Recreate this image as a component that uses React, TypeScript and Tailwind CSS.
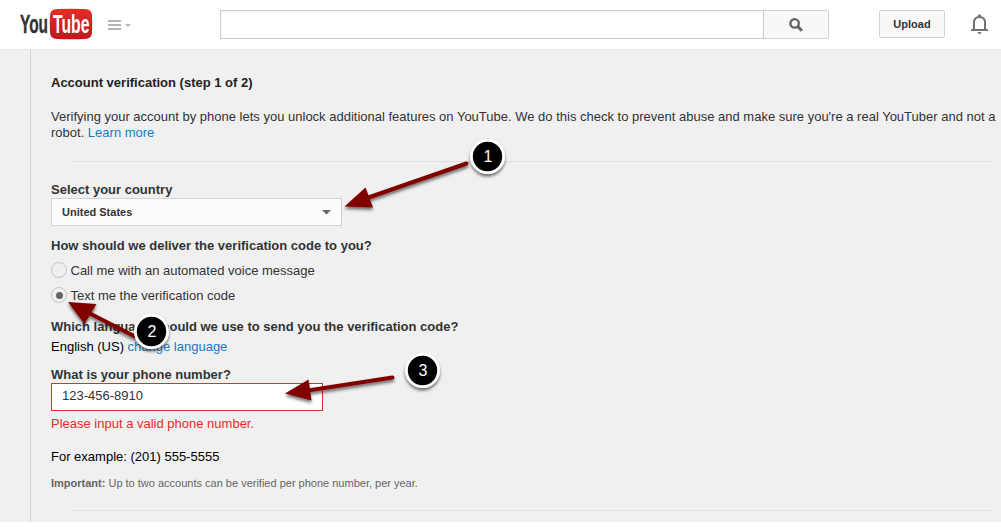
import { useState } from 'react';

type Marker = {
  label: string;
  cx: number;
  cy: number;
  // shaft runs from the badge to the base of the arrow head
  from: [number, number];
  to: [number, number];
  head: string;
};

const markers: Marker[] = [
  { label: '1', cx: 487.5, cy: 156.5, from: [466.5, 163.5], to: [367, 198], head: '344.5,206.5 365.5,187.5 373,207.5' },
  { label: '2', cx: 151.5, cy: 331.5, from: [134, 336], to: [89, 313], head: '68,302 96.5,304 84.5,324' },
  { label: '3', cx: 422.5, cy: 370.5, from: [392.5, 377.5], to: [308, 390.5], head: '285,393.5 308.5,379.5 311.5,400.5' },
];

const deliveryOptions = [
  { id: 'voice', label: 'Call me with an automated voice message' },
  { id: 'text', label: 'Text me the verification code' },
];

function Logo() {
  return (
    <svg className="block shrink-0 overflow-visible" width="74" height="32" viewBox="0 0 74 32">
      <defs>
        <linearGradient id="tube" x1="0" y1="0" x2="0" y2="1">
          <stop offset="0" stopColor="#e52d27" />
          <stop offset="1" stopColor="#bf171d" />
        </linearGradient>
      </defs>
      <path d="M37 1Q51 .4 65 1Q72 1 72 8Q72.5 16 72 24Q72 31 65 31Q51 31.6 37 31Q30 31 30 24Q29.5 16 30 8Q30 1 37 1z" fill="url(#tube)" />
      <g fontFamily="'Liberation Sans', Arial, sans-serif" fontWeight="700" fontSize="26">
        <text x="0" y="25" fill="#333" stroke="#333" strokeWidth="0.4" textLength="28" lengthAdjust="spacingAndGlyphs">You</text>
        <text x="33" y="25" fill="#fff" textLength="36.5" lengthAdjust="spacingAndGlyphs">Tube</text>
      </g>
    </svg>
  );
}

function Header() {
  return (
    <header className="flex h-[50px] items-start border-b border-[#e6e6e6] bg-white pl-5">
      <div className="mt-2">
        <Logo />
      </div>
      <svg className="mt-5 ml-3.5 block shrink-0" width="24" height="10" viewBox="0 0 24 10">
        <path d="M0 0h13v2H0zM0 4h13v2H0zM0 8h13v2H0zM17 4h6l-3 3z" fill="#b5b5b5" />
      </svg>
      <div className="mt-2.5 ml-[88px] flex h-[29px] w-[609px]">
        <div className="flex w-[544px] border border-[#ccc] bg-white shadow-[inset_0_1px_2px_#eee]">
          <input type="text" aria-label="Search" className="w-full border-none bg-transparent px-2 outline-none" />
        </div>
        <button className="flex w-[65px] items-center justify-center rounded-r-[2px] border border-l-0 border-[#d3d3d3] bg-[#f8f8f8]">
          <svg width="14" height="14" viewBox="0 0 13 13" fill="none" stroke="#666">
            <circle cx="5.2" cy="5" r="3.9" strokeWidth="2.2" />
            <path d="M8 7.8l4 4" strokeWidth="2.8" />
          </svg>
        </button>
      </div>
      <button className="mt-2.5 ml-[50px] h-7 w-[66px] rounded-[2px] border border-[#d3d3d3] bg-[#f8f8f8] text-[11px] leading-[26px] font-bold text-[#333]">
        Upload
      </button>
      <svg className="mt-[14px] ml-[26px] block shrink-0" width="17" height="20" viewBox="0 0 17 20">
        <path d="M3 15V8.5C3 5 5 3 8.5 3S14 5 14 8.5V15" fill="none" stroke="#737373" strokeWidth="2" />
        <path d="M7 3V1.2Q8.5-.6 10 1.2V3zM0 17v-1.2L2 14.5h13L17 15.8V17zM6.5 18h4q-.5 2-2 2t-2-2z" fill="#737373" />
        <path d="M4 13.5h9V15H4z" fill="#fff" />
      </svg>
    </header>
  );
}

function Annotations() {
  return (
    <svg className="pointer-events-none absolute top-0 left-0" width="1001" height="527" viewBox="0 0 1001 527">
      <defs>
        <filter id="shadow" x="-20%" y="-20%" width="140%" height="150%">
          <feDropShadow dx="0" dy="2.5" stdDeviation="1.8" floodColor="#000" floodOpacity="0.55" />
        </filter>
      </defs>
      {markers.map(m => (
        <g key={m.label}>
          <g filter="url(#shadow)">
            <line x1={m.from[0]} y1={m.from[1]} x2={m.to[0]} y2={m.to[1]} stroke="#800000" strokeWidth="4" strokeLinecap="round" />
            <polygon points={m.head} fill="#800000" />
          </g>
          <circle cx={m.cx} cy={m.cy} r="17.5" fill="#fff" filter="url(#shadow)" />
          <circle cx={m.cx} cy={m.cy} r="14.7" fill="#000" />
          <text x={m.cx + 0.5} y={m.cy + 5.5} textAnchor="middle" fill="#fff" fontSize="16" fontFamily="'Liberation Sans', Arial, sans-serif">
            {m.label}
          </text>
        </g>
      ))}
    </svg>
  );
}

export default function App() {
  const [delivery, setDelivery] = useState('text');
  const [phone, setPhone] = useState('123-456-8910');

  return (
    <div className="relative h-[527px] w-[1001px] overflow-hidden bg-white font-['Liberation_Sans',Arial,sans-serif] text-[13px] leading-4 text-[#333]">
      <Header />
      <div className="h-[472px] bg-[#f0f0f0] pl-[30px]">
        <main className="h-full border-l border-[#d3d3d3] pt-[25px] pl-5">
          <h1 className="font-bold text-[#222]">Account verification (step 1 of 2)</h1>
          <p className="mt-[18px] whitespace-nowrap">
            Verifying your account by phone lets you unlock additional features on YouTube. We do this check to prevent abuse and make sure you're a real YouTuber and not a
            <br />
            robot. <a href="#" className="text-[#167ac6]">Learn more</a>
          </p>
          <hr className="mt-5 mr-[9px] ml-5 border-[#e0e0e0]" />

          <h2 className="mt-5 font-bold">Select your country</h2>
          <button className="flex h-7 w-[291px] items-center justify-between border border-[#d3d3d3] bg-[#fcfcfc] px-2.5 text-[11px] font-bold">
            United States
            <svg width="9" height="5" viewBox="0 0 9 5">
              <path d="M0 0h9L4.5 4.5z" fill="#666" />
            </svg>
          </button>

          <h2 className="mt-3 font-bold">How should we deliver the verification code to you?</h2>
          {deliveryOptions.map(option => (
            <label key={option.id} className="mt-2 flex h-[17px] items-start">
              <input
                type="radio"
                name="delivery"
                className="sr-only"
                checked={delivery === option.id}
                onChange={() => setDelivery(option.id)}
              />
              <span className="mr-[3.5px] flex size-4 items-center justify-center rounded-full border border-[#c6c6c6]">
                {delivery === option.id && <span className="size-[7px] rounded-full bg-[#666]" />}
              </span>
              <span className="pt-px">{option.label}</span>
            </label>
          ))}

          <h2 className="mt-[15px] font-bold">Which language should we use to send you the verification code?</h2>
          <p className="mt-1 text-black">
            English (US) <a href="#" className="text-[#167ac6]">change language</a>
          </p>

          <h2 className="mt-3 font-bold">What is your phone number?</h2>
          <div className="flex h-7 w-[272px] border border-[#e52d27] bg-white">
            <input
              type="text"
              aria-label="Phone number"
              value={phone}
              onChange={(e) => setPhone(e.target.value)}
              className="w-full border-none bg-transparent px-2.5 pb-0.5 outline-none"
            />
          </div>
          <p className="mt-[5px] text-[#e52d27]">Please input a valid phone number.</p>
          <p className="mt-[17px] text-black">For example: (201) 555-5555</p>
          <p className="mt-2.5 text-[11px] text-[#666]">
            <b>Important:</b> Up to two accounts can be verified per phone number, per year.
          </p>
          <hr className="mt-[19px] mr-[9px] ml-5 border-[#e0e0e0]" />
        </main>
      </div>
      <Annotations />
    </div>
  );
}
